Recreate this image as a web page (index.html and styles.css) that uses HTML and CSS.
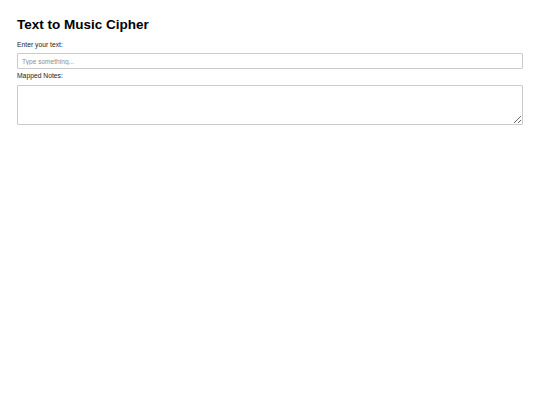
FILE: index.html
```html
<!DOCTYPE html>
<html>
<head>
  <title>Text to Music Cipher</title>
  <link rel="stylesheet" href="styles.css">
</head>
<body>
  <h1>Text to Music Cipher</h1>
  <label for="textInput">Enter your text:</label>
  <input type="text" id="textInput" placeholder="Type something...">
  <label for="output">Mapped Notes:</label>
  <textarea id="output" readonly></textarea>
</body>
</html>
```

FILE: styles.css
```css
body {
  margin: 0;
  padding: 17px;
  font-family: "Liberation Sans", Arial, sans-serif;
  background-color: #fff;
  color: #000;
}
h1 {
  font-size: 13.5px;
  line-height: 16px;
  margin: 0 0 8px;
}
label {
  display: block;
  font-size: 6.75px;
  line-height: 8px;
  color: #222;
}
input,
textarea {
  display: block;
  box-sizing: border-box;
  width: 100%;
  margin: 4px 0 3px;
  padding: 0 4px;
  font-family: "Liberation Sans", Arial, sans-serif;
  font-size: 6.6px;
  border: 1px solid #cbcbcb;
  border-radius: 1px;
  outline: none;
}
input {
  height: 16px;
}
input::placeholder {
  color: #8e8e8e;
}
textarea {
  height: 40px;
  margin-top: 5px;
  padding: 4px;
}
```
